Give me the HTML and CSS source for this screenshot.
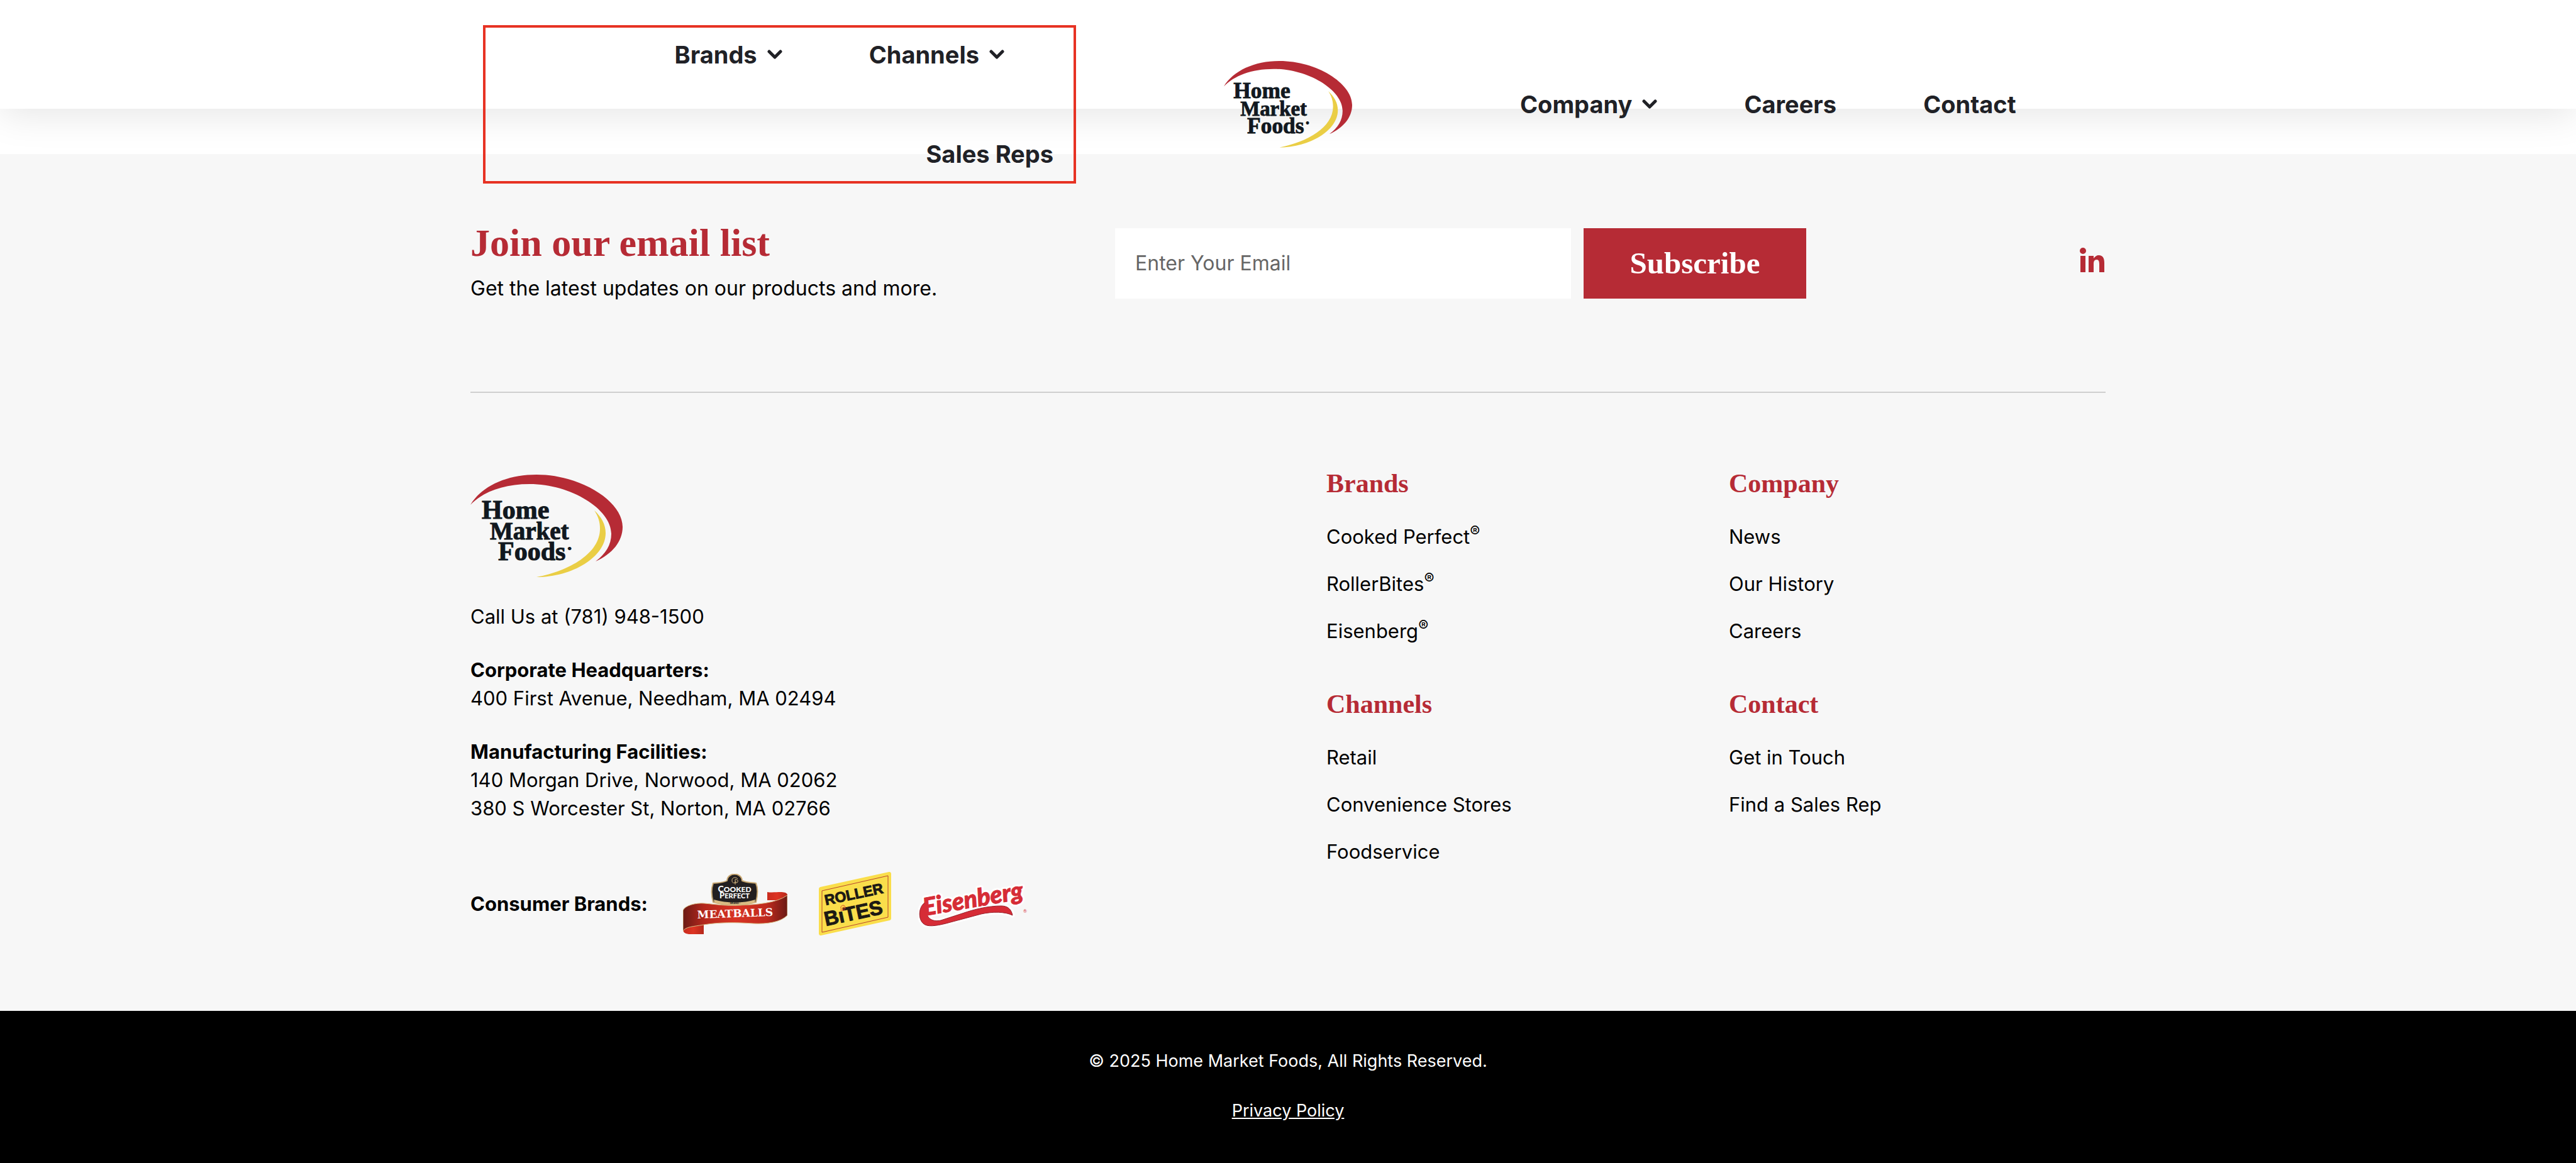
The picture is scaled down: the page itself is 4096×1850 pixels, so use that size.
FILE: index.html
```html
<!DOCTYPE html>
<html lang="en">
<head>
<meta charset="utf-8">
<meta name="viewport" content="width=device-width, initial-scale=1">
<title>Home Market Foods</title>
<link rel="stylesheet" href="styles.css">
</head>
<body>
<header class="site-header">
  <div class="header-inner">
    <nav class="nav nav-left" aria-label="Products">
      <ul class="nav-list">
        <li><a href="#">Brands<svg class="chevron" viewBox="0 0 24 16"><path d="M3 3L12 12L21 3"/></svg></a></li>
        <li><a href="#">Channels<svg class="chevron" viewBox="0 0 24 16"><path d="M3 3L12 12L21 3"/></svg></a></li>
        <li><a href="#">Sales Reps</a></li>
      </ul>
    </nav>
    <a class="header-logo" href="#" aria-label="Home Market Foods">
      <svg viewBox="0 0 242 163">
        <path fill="#b62b35" d="M0 48C18 18 58 0 105 0C175 0 242 42 242 83C242 106 226 126 199 138C215 126 224 112 224 94C224 55 160 15 94 15C52 15 19 28 0 48Z"/>
        <path fill="#eace45" d="M197 57C208 67 215 79 215 93C215 131 162 163 105 163C158 153 206 125 206 86C206 75 203 66 197 57Z"/>
        <g class="logo-text">
          <text x="18" y="70" font-size="42">Home</text>
          <text x="31" y="103" font-size="39">Market</text>
          <text x="44" y="136" font-size="42">Foods</text>
          <text x="155" y="120" font-size="7">®</text>
        </g>
      </svg>
    </a>
    <nav class="nav nav-right" aria-label="Company">
      <ul class="nav-list">
        <li><a href="#">Company<svg class="chevron" viewBox="0 0 24 16"><path d="M3 3L12 12L21 3"/></svg></a></li>
        <li><a href="#">Careers</a></li>
        <li><a href="#">Contact</a></li>
      </ul>
    </nav>
  </div>
</header>

<footer class="site-footer">
  <div class="container">
    <section class="signup">
      <div class="signup-intro">
        <h2>Join our email list</h2>
        <p>Get the latest updates on our products and more.</p>
      </div>
      <form class="signup-form">
        <input type="email" placeholder="Enter Your Email" aria-label="Email">
        <button type="button">Subscribe</button>
      </form>
      <a class="social" href="#" aria-label="LinkedIn">
        <svg viewBox="0 0 39 39"><circle cx="5" cy="5" r="5"/><path d="M1 13H9V39H1ZM14 13H22V17C24 14 27 12 30 12C37 12 39 17 39 24V39H31V26C31 22 30 19 27 19C23 19 22 22 22 26V39H14Z"/></svg>
      </a>
    </section>

    <section class="info">
      <div class="about">
        <a class="footer-logo" href="#" aria-label="Home Market Foods">
          <svg viewBox="0 0 242 163">
            <path fill="#b62b35" d="M0 48C18 18 58 0 105 0C175 0 242 42 242 83C242 106 226 126 199 138C215 126 224 112 224 94C224 55 160 15 94 15C52 15 19 28 0 48Z"/>
            <path fill="#eace45" d="M197 57C208 67 215 79 215 93C215 131 162 163 105 163C158 153 206 125 206 86C206 75 203 66 197 57Z"/>
            <g class="logo-text">
              <text x="18" y="70" font-size="42">Home</text>
              <text x="31" y="103" font-size="39">Market</text>
              <text x="44" y="136" font-size="42">Foods</text>
              <text x="155" y="120" font-size="7">®</text>
            </g>
          </svg>
        </a>
        <p>Call Us at (781) 948-1500</p>
        <p><strong>Corporate Headquarters:</strong><br>400 First Avenue, Needham, MA 02494</p>
        <p><strong>Manufacturing Facilities:</strong><br>140 Morgan Drive, Norwood, MA 02062<br>380 S Worcester St, Norton, MA 02766</p>
        <div class="consumer">
          <strong>Consumer Brands:</strong>
          <a class="brand-cooked" href="#" aria-label="Cooked Perfect Meatballs">
            <svg viewBox="0 0 166 96">
              <defs>
                <linearGradient id="ribbon"><stop offset="0" stop-color="#6b1a15"/><stop offset=".2" stop-color="#b3271c"/><stop offset=".5" stop-color="#d93324"/><stop offset=".8" stop-color="#c02b1e"/><stop offset="1" stop-color="#6b1a15"/></linearGradient>
                <linearGradient id="fold"><stop offset="0" stop-color="#c92c1e"/><stop offset=".5" stop-color="#dd3423"/><stop offset="1" stop-color="#b5281b"/></linearGradient>
              </defs>
              <path fill="url(#fold)" d="M134 29C146 31 163 26 166 33V42H134Z"/>
              <path fill="url(#fold)" d="M0 88C0 96 8 96 14 96H33V79L5 80Z"/>
              <path fill="url(#ribbon)" stroke="#d9bb83" d="M0 58C4 50 20 46 34 47C56 49 68 51 89 50C116 49 148 47 166 34V66C155 77 134 80 112 79C82 77 57 77 33 81C16 84 4 84 0 91Z"/>
              <path fill="#231f20" stroke="#c9a873" stroke-width="2" d="M48 15C56 14 65 14 70 11C71 -3 93 -3 94 11C101 14 109 14 116 15C119 22 119 33 116 45C95 51 69 51 48 45C45 34 45 23 48 15Z"/>
              <path fill="#d9bb83" d="M49 41C70 47 96 47 115 41L114 46C94 51 70 51 50 46Z"/>
              <path d="M87 8C84 4 77 6 78 11C78 16 84 15 84 12M83 17V9C86 8 89 11 86 14L82 14" fill="none" stroke="#d9bb83"/>
              <g fill="#fff" text-anchor="middle" font-family="Lato, sans-serif" font-weight="900">
                <text x="82" y="29" font-size="12"><tspan font-size="14">C</tspan>OOKED</text>
                <text x="82" y="39" font-size="11"><tspan font-size="13">P</tspan>ERFECT</text>
                <text x="82" y="48" font-size="4" fill="#231f20">· BRAND ·</text>
              </g>
              <text x="83" y="69" transform="rotate(-2 83 68)" text-anchor="middle" fill="#fff" font-family="DejaVu Serif, serif" font-weight="700" font-size="17">MEATBALLS</text>
            </svg>
          </a>
          <a class="brand-roller" href="#" aria-label="RollerBites">
            <svg viewBox="0 0 115 101">
              <path fill="#fade4b" stroke="#fade4b" stroke-width="6" stroke-linejoin="round" d="M3 27L112 3V74L3 98Z"/>
              <path fill="none" stroke="#b8452f" stroke-width="1" stroke-linejoin="round" d="M5 30L110 6V72L5 96Z"/>
              <g fill="#1d1a14" stroke="#1d1a14" stroke-width="1" font-family="Liberation Sans, sans-serif" font-weight="700">
                <text x="11" y="53" transform="rotate(-12 11 53)" font-size="23">ROLLER</text>
                <text x="11" y="86" transform="rotate(-12 11 86)" font-size="32">BıTES</text>
              </g>
              <path d="M38 57C38 55 41 56 40 58C38 61 34 59 35 56C36 52 42 52 42 57C42 61 37 63 34 60" fill="none" stroke="#d8452f"/>
            </svg>
          </a>
          <a class="brand-eisenberg" href="#" aria-label="Eisenberg">
            <svg viewBox="0 0 179 75">
              <g stroke="#fff" stroke-width="7" stroke-linejoin="round" fill="#fff">
                <path d="M10 36C0 44 0 62 8 69C14 75 28 73 44 69L100 54C118 50 138 50 150 56C148 46 142 41 132 41C112 41 90 46 70 53L36 64C22 67 12 60 14 48Z"/>
                <text x="10" y="57" transform="rotate(-10 10 57)" font-family="Lato, sans-serif" font-style="italic" font-weight="900" font-size="39">Eisenberg</text>
              </g>
              <g fill="#d62c36" stroke="#d62c36" stroke-width="1">
                <path stroke="#96212c" d="M10 36C0 44 0 62 8 69C14 75 28 73 44 69L100 54C118 50 138 50 150 56C148 46 142 41 132 41C112 41 90 46 70 53L36 64C22 67 12 60 14 48Z"/>
                <text x="10" y="57" transform="rotate(-10 10 57)" font-family="Lato, sans-serif" font-style="italic" font-weight="900" font-size="39">Eisenberg</text>
              </g>
              <text x="167" y="52" font-family="Lato, sans-serif" font-size="7" fill="#d62c36">®</text>
            </svg>
          </a>
        </div>
      </div>

      <div class="links">
        <h3>Brands</h3>
        <ul>
          <li><a href="#">Cooked Perfect<sup>®</sup></a></li>
          <li><a href="#">RollerBites<sup>®</sup></a></li>
          <li><a href="#">Eisenberg<sup>®</sup></a></li>
        </ul>
        <h3>Channels</h3>
        <ul>
          <li><a href="#">Retail</a></li>
          <li><a href="#">Convenience Stores</a></li>
          <li><a href="#">Foodservice</a></li>
        </ul>
      </div>

      <div class="links">
        <h3>Company</h3>
        <ul>
          <li><a href="#">News</a></li>
          <li><a href="#">Our History</a></li>
          <li><a href="#">Careers</a></li>
        </ul>
        <h3>Contact</h3>
        <ul>
          <li><a href="#">Get in Touch</a></li>
          <li><a href="#">Find a Sales Rep</a></li>
        </ul>
      </div>
    </section>
  </div>

  <div class="legal">
    <p>© 2025 Home Market Foods, All Rights Reserved.</p>
    <p><a href="#">Privacy Policy</a></p>
  </div>
</footer>
</body>
</html>
```
FILE: styles.css
```css
:root {
  --red: #b62b35;
  --sans: Inter, "Open Sans", sans-serif;
  --serif: "Liberation Serif", serif;
}

* {
  box-sizing: border-box;
  margin: 0;
  padding: 0;
}

body {
  display: flex;
  flex-direction: column;
  min-height: 100vh;
  background: #fff;
  color: #000;
  font: 400 31px/45px var(--sans);
}

a {
  color: inherit;
  text-decoration: none;
}

ul {
  list-style: none;
}

svg {
  display: block;
}

.logo-text {
  fill: #111820;
  stroke: #111820;
  stroke-width: 1;
  font-family: var(--serif);
  font-weight: 700;
}

/* Header: the menu rows run past the bar's lower edge */
.site-header {
  position: relative;
  z-index: 1;
  height: 173px;
  background: #fff;
  box-shadow: 0 10px 60px rgba(0, 0, 0, .1);
}

.header-inner {
  display: grid;
  grid-template-columns: 1fr 204px 1fr;
  column-gap: 235px;
  align-items: center;
  max-width: 2600px;
  height: 332px;
  margin: 0 auto;
  padding: 0 20px;
}

.header-logo svg {
  width: 100%;
}

.nav {
  color: #202126;
  font-size: 38px;
  font-weight: 700;
  line-height: 50px;
}

.nav-left {
  display: flex;
  align-items: center;
  height: 252px;
  padding: 0 32px;
  border: 4px solid #e73223;
}

.nav-left .nav-list {
  flex-wrap: wrap;
  justify-content: flex-end;
  row-gap: 108px;
  width: 100%;
}

.nav-right {
  padding-left: 32px;
}

.nav-list {
  display: flex;
}

.nav-list li {
  margin-right: 78px;
}

.nav-left li,
.nav-list li + li {
  padding-left: 60px;
}

.nav-list li:last-child {
  margin-right: 0;
}

.nav-list a {
  display: flex;
  align-items: center;
}

.chevron {
  width: 24px;
  height: 16px;
  margin-left: 16px;
  fill: none;
  stroke: currentColor;
  stroke-width: 5;
  stroke-linecap: round;
  stroke-linejoin: round;
}

/* Footer */
.site-footer {
  display: flex;
  flex: 1;
  flex-direction: column;
  margin-top: 72px;
  background: #f7f7f7;
}

.container {
  width: 100%;
  max-width: 2600px;
  margin: 0 auto;
}

.signup {
  display: grid;
  grid-template-columns: 1025fr 1099fr 476fr;
  align-items: center;
  padding: 111px 0 142px;
  border-bottom: 2px solid #cfcfcf;
  font-size: 32px;
}

h2,
h3,
.signup-form button {
  color: var(--red);
  font-family: var(--serif);
  font-weight: 700;
}

h2 {
  margin-bottom: 20px;
  font-size: 62px;
  line-height: 60px;
}

.signup-form {
  display: flex;
  gap: 20px;
  height: 112px;
}

.signup-form input {
  flex: 1;
  min-width: 0;
  padding: 0 32px;
  border: 0;
  background: #fff;
  color: #000;
  font: inherit;
}

.signup-form input::placeholder {
  color: #666;
}

.signup-form button {
  width: 354px;
  border: 0;
  background: var(--red);
  color: #fff;
  font-size: 49px;
}

.social {
  justify-self: end;
  padding: 0 2px 10px 0;
}

.social svg {
  width: 39px;
  fill: var(--red);
}

.info {
  display: grid;
  grid-template-columns: 1361fr 640fr 599fr;
  padding: 122px 0 120px;
}

.about {
  padding-top: 8px;
}

.footer-logo {
  display: block;
  width: 242px;
  margin-bottom: 40px;
}

.about p {
  margin-bottom: 40px;
}

.consumer {
  display: flex;
  align-items: center;
  padding-top: 39px;
}

.brand-cooked {
  width: 166px;
  margin-left: 56px;
}

.brand-roller {
  width: 115px;
  margin-left: 50px;
}

.brand-eisenberg {
  width: 179px;
  margin-left: 43px;
}

h3 {
  margin-bottom: 39px;
  font-size: 42px;
  line-height: 45px;
}

.links ul {
  display: flex;
  flex-direction: column;
  gap: 30px;
  margin-bottom: 72px;
}

.links ul:last-child {
  margin-bottom: 0;
}

sup {
  font-size: 24px;
  line-height: 0;
}

.legal {
  flex: 1;
  padding: 60px 20px 40px;
  background: #000;
  color: #fff;
  font-size: 27px;
  line-height: 39px;
  text-align: center;
}

.legal p + p {
  margin-top: 40px;
}

.legal a {
  text-decoration: underline;
}
```
